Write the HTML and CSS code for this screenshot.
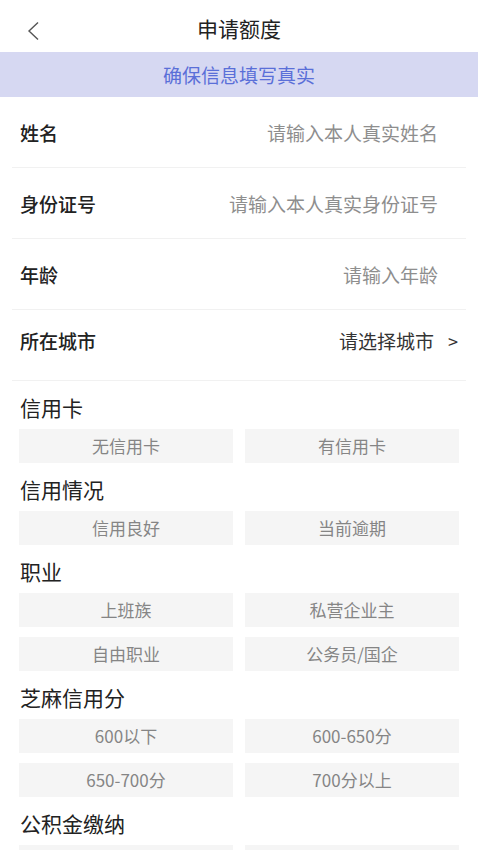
FILE: index.html
```html
<!DOCTYPE html>
<html lang="zh-CN">
<head>
    <meta charset="UTF-8">
    <meta name="viewport" content="width=device-width, initial-scale=1.0">
    <title>申请额度</title>
    <link rel="stylesheet" href="styles.css">
</head>
<body>
    <div class="header">
        <span class="back">
            <svg width="14" height="20" viewBox="0 0 14 20"><polyline points="12,1.5 3,10 12,18.5" fill="none" stroke="#555" stroke-width="1.4"/></svg>
        </span>
        <h1>申请额度</h1>
    </div>
    <div class="notice">确保信息填写真实</div>

    <div class="form">
        <div class="row">
            <span class="label">姓名</span>
            <span class="value placeholder">请输入本人真实姓名</span>
        </div>
        <div class="row">
            <span class="label">身份证号</span>
            <span class="value placeholder">请输入本人真实身份证号</span>
        </div>
        <div class="row">
            <span class="label">年龄</span>
            <span class="value placeholder">请输入年龄</span>
        </div>
        <div class="row row-city">
            <span class="label">所在城市</span>
            <span class="value select">请选择城市<span class="arrow">&gt;</span></span>
        </div>
    </div>

    <div class="section">
        <div class="section-title">信用卡</div>
        <div class="options">
            <div class="option">无信用卡</div>
            <div class="option">有信用卡</div>
        </div>
    </div>
    <div class="section">
        <div class="section-title">信用情况</div>
        <div class="options">
            <div class="option">信用良好</div>
            <div class="option">当前逾期</div>
        </div>
    </div>
    <div class="section">
        <div class="section-title">职业</div>
        <div class="options">
            <div class="option">上班族</div>
            <div class="option">私营企业主</div>
            <div class="option">自由职业</div>
            <div class="option">公务员/国企</div>
        </div>
    </div>
    <div class="section">
        <div class="section-title">芝麻信用分</div>
        <div class="options">
            <div class="option">600以下</div>
            <div class="option">600-650分</div>
            <div class="option">650-700分</div>
            <div class="option">700分以上</div>
        </div>
    </div>
    <div class="section">
        <div class="section-title">公积金缴纳</div>
        <!-- 选项在首屏之外 -->
        <div class="options">
            <div class="option"></div>
            <div class="option"></div>
        </div>
    </div>
</body>
</html>
```

FILE: styles.css
```css
body {
    margin: 0;
    font-family: "Noto Sans CJK SC", "Noto Sans", sans-serif;
    color: #222;
    background: #fff;
}
.header {
    position: relative;
    height: 52px;
    display: flex;
    align-items: center;
    justify-content: center;
}
.header h1 {
    margin: 0;
    font-size: 21px;
    font-weight: 400;
    line-height: 52px;
    color: #222;
    padding-top: 4px;
}
.back {
    position: absolute;
    left: 26px;
    top: 21px;
    line-height: 0;
}
.notice {
    height: 45px;
    line-height: 45px;
    text-align: center;
    background: #d6d8f2;
    color: #5a6fd8;
    font-size: 19px;
}
.form {
    padding: 0 12px;
}
.row {
    height: 70px;
    display: flex;
    align-items: center;
    justify-content: space-between;
    border-bottom: 1px solid #f1f1f1;
    padding: 0 8px;
    font-size: 19px;
}
.label {
    font-weight: 500;
    color: #222;
}
.placeholder {
    color: #8e8e8e;
    margin-right: 20px;
}
.row-city {
    padding-bottom: 10px;
    height: 60px;
}
.select {
    color: #333;
}
.arrow {
    margin-left: 14px;
    font-size: 18px;
}
.section {
    padding: 14px 19px 0;
}
.section-title {
    height: 24px;
    line-height: 24px;
    font-size: 21px;
    margin-left: 1px;
    margin-bottom: 10px;
    color: #222;
}
.options {
    display: grid;
    grid-template-columns: 1fr 1fr;
    column-gap: 12px;
    row-gap: 10px;
}
.option {
    height: 34px;
    line-height: 34px;
    text-align: center;
    background: #f5f5f5;
    color: #858585;
    font-size: 17px;
}
```
